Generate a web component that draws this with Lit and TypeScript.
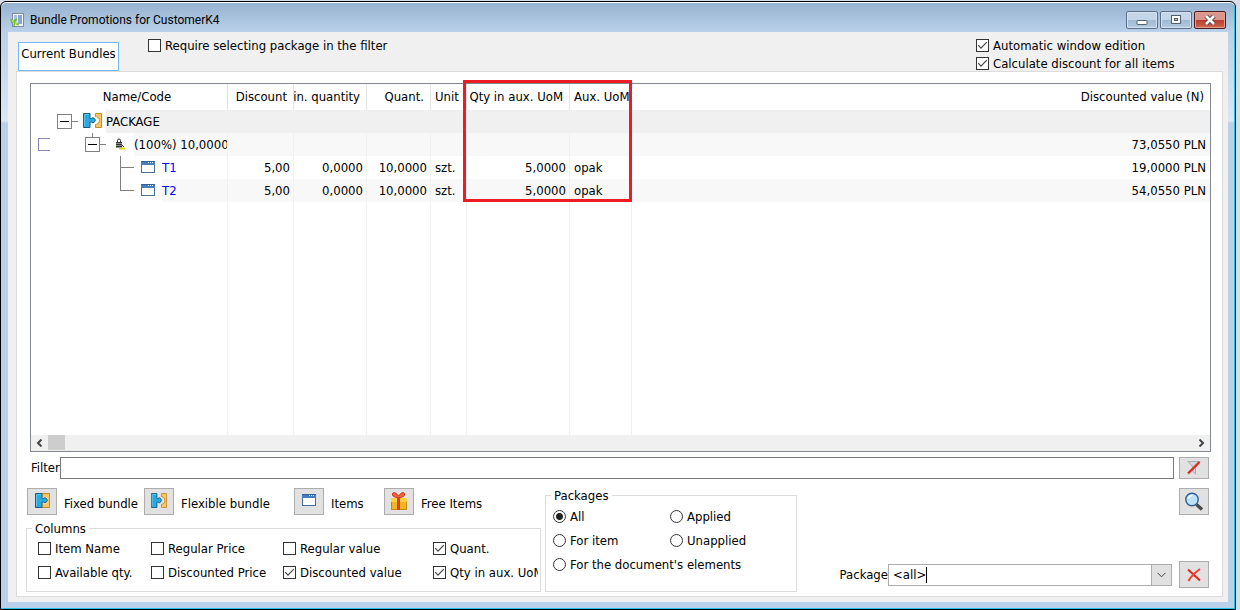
import { LitElement, html, css, svg, nothing } from "lit";
import { customElement } from "lit/decorators.js";

const bluePiece = svg`
  <path d="M0.5 0.5h6.500v5h1.200a2.400 2.400 0 1 1 0 3.500H7v5.500h-6.500z" fill="#29a9dd" stroke="#14608c"/>
  <path d="M1.500 13V1.500H6" stroke="#5cc6ee" fill="none"/>`;

const puzzleOpen = svg`
  <path d="M12.500 0.500h6v14h-6v-3.200h1a3.900 3.900 0 0 0 0-7.600h-1z" fill="#fbc768" stroke="#c98a22"/>
  ${bluePiece}`;

const puzzleClosed = svg`
  <path d="M6.500 0.500h8v14h-8z" fill="#fbc45c" stroke="#c98a22"/>
  <circle cx="9.500" cy="7.300" r="3.600" fill="#fde3ae"/>
  ${bluePiece}`;

const windowGlyph = svg`
  <rect x="0.5" y="0.5" width="13" height="11" fill="#fff" stroke="#4c6e94"/>
  <rect x="0" y="0" width="14" height="4" fill="#4480bd"/>
  <path d="M0 0.5h14" stroke="#2f619b"/>
  <path d="M7 1.5h1M9 1.5h1M11 1.5h1" stroke="#fff"/>`;

const minusBox = (x: number, y: number) => svg`
  <rect x="${x + 0.5}" y="${y + 0.5}" width="14" height="14" fill="#fff" stroke="#808080"/>
  <path d="M${x + 3} ${y + 7.5}h9" stroke="#000"/>
  <path d="M${x + 15} ${y + 7.5}h6" stroke="#808080"/>`;

@customElement("app-root")
export class AppRoot extends LitElement {
  static styles = css`
    :host {
      display: block;
      height: 100vh;
      font: 13px/15px "DejaVu Sans Condensed", "DejaVu Sans", sans-serif;
      color: #000;
      background: #d8dde9;
      box-sizing: border-box;
      padding: 1px 4px 0 0;
    }
    * { box-sizing: border-box; }
    .window {
      height: 100%;
      display: flex;
      flex-direction: column;
      border: 1px solid #000;
      border-radius: 6px 6px 0 0;
      box-shadow: inset 0 1px #fff, inset -1px -1px #22c3e6;
      padding: 1px 7px 7px 7px;
      background: linear-gradient(#99b4d1 2px, #b9d1ea 30px, #c4d8ee 60px, #dae8f6 119px, #b9d1ea 121px);
    }
    .title {
      flex: none;
      height: 29px;
      display: flex;
      align-items: center;
      gap: 6px;
      padding: 5px 2px 0;
      font: 12px/16px Roboto, "Open Sans", sans-serif;
    }
    .title h1 { flex: 1; margin: 0; font: inherit; }
    .caption { display: flex; gap: 2px; }
    .caption button {
      width: 32px;
      height: 18px;
      padding: 0;
      border: 1px solid #5b6f8a;
      border-radius: 2px;
      box-shadow: inset 0 0 0 1px #d3e1f0;
      background: linear-gradient(#c3d5e8 50%, #9fb8d3 50%, #b4cbe3);
      display: grid;
      place-items: center;
    }
    .caption .close {
      border-color: #4d1a1e;
      box-shadow: inset 0 0 0 1px #dfa096;
      background: linear-gradient(#d9968b 50%, #b8392a 50%, #cf6a50);
    }
    .client {
      flex: 1;
      min-height: 0;
      display: flex;
      flex-direction: column;
      background: #f0f0f0;
      padding: 0 5px 5px 8px;
    }
    .top { flex: none; height: 39px; display: flex; align-items: flex-start; padding-left: 2px; }
    .tab {
      align-self: flex-end;
      height: 29px;
      width: 101px;
      padding: 0 0 6px;
      border: 1px solid #73b9f5;
      background: #fff;
      font: inherit;
      color: inherit;
      white-space: nowrap;
      display: flex;
      align-items: center;
      justify-content: center;
    }
    .require { flex: 1; padding: 6px 0 0 29px; }
    .options { flex: 0 0 247px; padding-top: 6px; display: grid; gap: 3px; }
    .check { display: flex; gap: 4px; align-items: center; white-space: nowrap; }
    .check input {
      appearance: none;
      flex: none;
      margin: 0;
      width: 13px;
      height: 13px;
      border: 1px solid #333;
      background: #fff;
    }
    .check input[type="checkbox"]:checked {
      background: #fff url("data:image/svg+xml,%3Csvg xmlns='http://www.w3.org/2000/svg' viewBox='0 0 11 11'%3E%3Cpath d='M1.2 5.2l2.8 2.9 5.8-5.9' fill='none' stroke='%23444' stroke-width='1.2'/%3E%3C/svg%3E");
    }
    .check input[type="radio"] { border-radius: 50%; }
    .check input[type="radio"]:checked { background: radial-gradient(circle, #222 3px, #fff 4px); }
    .panel {
      flex: 1;
      min-height: 0;
      display: flex;
      flex-direction: column;
      background: #fff;
      border: 1px solid #dcdcdc;
      padding: 11px 11px 4px 9px;
    }
    .list {
      flex: 1;
      min-height: 0;
      margin-left: 4px;
      position: relative;
      border: 1px solid #828790;
      display: flex;
      flex-direction: column;
    }
    .view { flex: 1; min-height: 0; }
    table { width: 100%; height: 100%; table-layout: fixed; border-collapse: separate; border-spacing: 0; }
    th, td { padding: 0; font-weight: normal; text-align: left; white-space: nowrap; border-right: 1px solid #f0f0f0; overflow: hidden; }
    th { border-color: #e5e5e5; padding-bottom: 2px; }
    th:last-child, td:last-child { border-right: 0; }
    thead tr { height: 26px; }
    tbody tr { height: 23px; }
    tbody tr.rest { height: auto; }
    th div { display: flex; padding: 0 6px; }
    th .num { justify-content: flex-end; }
    th .center { justify-content: center; padding-left: 22px; }
    th .left, td.left { padding-left: 4px; }
    th .left { padding-right: 0; }
    td.num { text-align: right; padding-right: 3px; }
    td.value { padding-right: 4px; }
    .c-name { width: 197px; }
    .c-disc { width: 66px; }
    .c-min { width: 73px; }
    .c-quant { width: 64px; }
    .c-unit { width: 36px; }
    .c-qty { width: 103px; }
    .c-aux { width: 62px; }
    .group td:not(.name), .group .label { background: #f0f0f0; }
    .alt td:not(.name), .alt .label { background: #f8f8f8; }
    .tree { display: flex; height: 23px; align-items: center; }
    .tree svg { flex: none; display: block; }
    .label { flex: 1; line-height: 23px; }
    .item .label { color: #00f; }
    .mark {
      appearance: none;
      flex: none;
      margin: 0 0 0 7px;
      width: 12px;
      height: 13px;
      border: 1px solid #8c84b8;
      border-right: 0;
    }
    .highlight {
      position: absolute;
      left: 432px;
      top: -4px;
      width: 169px;
      height: 122px;
      border: 3px solid #ed1c24;
      pointer-events: none;
    }
    .scroll { flex: none; height: 16px; background: #f0f0f0; display: flex; }
    .scroll button { width: 17px; border: 0; padding: 0; background: none; display: grid; place-items: center; }
    .thumb { width: 17px; height: 15px; background: #cdcdcd; }
    .scroll .end { margin-left: auto; }
    .filter { flex: none; display: flex; margin: 5px 2px 9px 5px; height: 22px; }
    .filter label { flex: 0 0 29px; line-height: 22px; white-space: nowrap; }
    .filter input { flex: 1; min-width: 0; border: 1px solid #7a7a7a; padding: 0 4px; margin-right: 5px; font: inherit; }
    .tool {
      flex: none;
      width: 30px;
      height: 27px;
      padding: 0;
      border: 1px solid #adadad;
      background: #e1e1e1;
      display: grid;
      place-items: center;
    }
    .filter .tool { height: 22px; }
    .bottom { flex: none; display: grid; grid-template-columns: 515px 252px 1fr; gap: 4px; height: 104px; }
    .left-side { display: flex; flex-direction: column; justify-content: space-between; min-width: 0; }
    .tools { display: grid; grid-template-columns: 117px 150px 90px auto; padding-left: 1px; }
    .tools label { display: flex; gap: 7px; white-space: nowrap; }
    .tools .tool { padding-bottom: 2px; }
    .tools span { padding-top: 8px; }
    fieldset { margin: 0; min-width: 0; border: 1px solid #dcdcdc; padding: 0; }
    legend { margin-left: 5px; padding: 0 3px; line-height: 15px; }
    .columns { height: 71px; }
    .columns .grid { display: grid; grid-template-columns: 113px 132px 150px 105px; row-gap: 9px; padding: 5px 0 0 11px; }
    .columns .check { overflow: hidden; }
    .packages .grid { display: grid; grid-template-columns: 117px auto; row-gap: 9px; padding: 6px 0 0 7px; }
    .packages .wide { grid-column: span 2; }
    .right-side { display: flex; flex-direction: column; justify-content: space-between; align-items: flex-end; padding: 0 2px 4px 0; }
    .package { display: flex; align-items: center; }
    .combo { position: relative; width: 284px; height: 22px; margin-right: 7px; }
    .combo select {
      appearance: none;
      width: 100%;
      height: 100%;
      padding: 0 24px 0 4px;
      border: 1px solid #adadad;
      border-radius: 0;
      background: #fff;
      color: #000;
      font: inherit;
    }
    .arrow {
      position: absolute;
      right: 0;
      top: 0;
      width: 21px;
      height: 22px;
      border: 1px solid #adadad;
      background: #e1e1e1;
      display: grid;
      place-items: center;
      pointer-events: none;
    }
    .caret { position: absolute; left: 38px; top: 3px; width: 1px; height: 16px; background: #000; pointer-events: none; }
  `;

  private check(text: string, checked = false) {
    return html`<label class="check"><input type="checkbox" ?checked=${checked} />${text}</label>`;
  }

  private radio(text: string, checked = false, cls = "") {
    return html`<label class="check ${cls}"><input type="radio" name="packages" ?checked=${checked} />${text}</label>`;
  }

  private tool(id: string, text: string, icon: unknown) {
    return html`<label for=${id}><button class="tool" id=${id}>${icon}</button><span>${text}</span></label>`;
  }

  private item(name: string, value: string, last: boolean) {
    return html`<tr class="item ${last ? "alt" : ""}">
      <td class="name"><div class="tree">
        <svg width="131" height="23">
          <path d="M89.5 0V${last ? 11 : 23}M89 11.5h14" stroke="#808080" fill="none"/>
          <g transform="translate(110,5)">${windowGlyph}</g>
        </svg>
        <span class="label">${name}</span></div></td>
      <td class="num">5,00</td>
      <td class="num">0,0000</td>
      <td class="num">10,0000</td>
      <td class="left">szt.</td>
      <td class="num">5,0000</td>
      <td class="left">opak</td>
      <td class="num value">${value}</td>
    </tr>`;
  }

  private blanks(value: unknown = nothing) {
    return html`<td></td><td></td><td></td><td></td><td></td><td></td><td class="num value">${value}</td>`;
  }

  render() {
    return html`<main class="window">
      <header class="title">
        <svg width="14" height="14" viewBox="0 0 14 14">
          <rect x="2.5" y="0.5" width="11" height="13" fill="#f4f7fc" stroke="#7d8ba5"/>
          <rect x="4" y="2" width="3" height="9" fill="#a9bde0"/><rect x="8" y="2" width="4" height="9" fill="#8ea6d6"/>
          <path d="M0.500 6.500l8 5.500M1 9.500l6-3.500M4 13l1-6" stroke="#6cc41c" stroke-width="1.600" fill="none"/>
          <path d="M2 8h2M5 10h2" stroke="#d6f5b0"/>
        </svg>
        <h1>Bundle Promotions for CustomerK4</h1>
        <div class="caption">
          <button aria-label="Minimize"><svg width="12" height="10"><rect x="1" y="5.5" width="10" height="4" rx="0.5" fill="#fff" stroke="#55606e"/></svg></button>
          <button aria-label="Maximize"><svg width="10" height="10"><rect x="0.5" y="0.5" width="9" height="8" fill="#fff" stroke="#55606e"/><rect x="3.5" y="3.5" width="3" height="2" fill="#a9bed6" stroke="#55606e"/></svg></button>
          <button class="close" aria-label="Close"><svg width="12" height="10"><path d="M2 1l8 8M10 1l-8 8" stroke="#5a3a40" stroke-width="4.500"/><path d="M2 1l8 8M10 1l-8 8" stroke="#fff" stroke-width="2.600"/></svg></button>
        </div>
      </header>
      <section class="client">
        <div class="top">
          <button class="tab">Current Bundles</button>
          <div class="require">${this.check("Require selecting package in the filter")}</div>
          <div class="options">
            ${this.check("Automatic window edition", true)}
            ${this.check("Calculate discount for all items", true)}
          </div>
        </div>
        <div class="panel">
          <div class="list">
            <div class="view">
              <table>
                <colgroup>
                  <col class="c-name" /><col class="c-disc" /><col class="c-min" /><col class="c-quant" />
                  <col class="c-unit" /><col class="c-qty" /><col class="c-aux" /><col />
                </colgroup>
                <thead><tr>
                  <th><div class="center">Name/Code</div></th>
                  <th><div class="num">Discount</div></th>
                  <th><div class="num">Min. quantity</div></th>
                  <th><div class="num">Quant.</div></th>
                  <th><div class="left">Unit</div></th>
                  <th><div class="num">Qty in aux. UoM</div></th>
                  <th><div class="left">Aux. UoM</div></th>
                  <th><div class="num">Discounted value (N)</div></th>
                </tr></thead>
                <tbody>
                  <tr class="group">
                    <td class="name"><div class="tree">
                      <svg width="75" height="23">${minusBox(26, 4)}
                        <g transform="translate(52,3)">${puzzleOpen}</g>
                      </svg>
                      <span class="label">PACKAGE</span></div></td>
                    ${this.blanks()}
                  </tr>
                  <tr class="alt">
                    <td class="name"><div class="tree">
                      <input class="mark" type="checkbox" aria-label="Select (100%) 10,0000" />
                      <svg width="84" height="23" viewBox="19 0 84 23">
                        <path d="M61.5 0v4" stroke="#808080"/>${minusBox(54, 4)}
                        <path d="M86.500 9V7.500a1.500 1.500 0 0 1 3 0V9" fill="none" stroke="#333"/>
                        <rect x="85" y="9" width="6" height="6" fill="#8a8a8a"/>
                        <path d="M85 9.500h6M85 11.500h6M85 13.500h6" stroke="#333"/>
                        <path d="M90 11l3 3" stroke="#333"/><path d="M88 15.500h6" stroke="#e2d21a" stroke-width="2"/>
                      </svg>
                      <span class="label">(100%) 10,0000</span></div></td>
                    ${this.blanks("73,0550 PLN")}
                  </tr>
                  ${this.item("T1", "19,0000 PLN", false)}
                  ${this.item("T2", "54,0550 PLN", true)}
                  <tr class="rest"><td></td>${this.blanks()}</tr>
                </tbody>
              </table>
            </div>
            <div class="scroll">
              <button aria-label="Scroll left"><svg width="7" height="8"><path d="M5.5 0.5L2 4l3.5 3.5" stroke="#444" stroke-width="2" fill="none"/></svg></button>
              <div class="thumb"></div>
              <button class="end" aria-label="Scroll right"><svg width="7" height="8"><path d="M1.5 0.5L5 4 1.5 7.5" stroke="#444" stroke-width="2" fill="none"/></svg></button>
            </div>
            <div class="highlight"></div>
          </div>
          <div class="filter">
            <label for="filter">Filter</label>
            <input id="filter" type="text" />
            <button class="tool" aria-label="Clear filter"><svg width="14" height="14" viewBox="0 0 14 14">
              <path d="M1 0.5h12L8.5 6v7L6 11V6z" fill="#d5d7da" stroke="#a8abb0"/>
              <path d="M1 12.5L12.5 1" stroke="#de2b25" stroke-width="2.4"/></svg></button>
          </div>
          <div class="bottom">
            <div class="left-side">
              <div class="tools">
                ${this.tool("fixed", "Fixed bundle", html`<svg width="15" height="15">${puzzleClosed}</svg>`)}
                ${this.tool("flexible", "Flexible bundle", html`<svg width="16" height="15" viewBox="0 0 19 15" preserveAspectRatio="none">${puzzleOpen}</svg>`)}
                ${this.tool("items", "Items", html`<svg width="14" height="14">${windowGlyph}</svg>`)}
                ${this.tool("free", "Free Items", html`<svg width="18" height="20" viewBox="0 0 18 20">
                  <rect x="1.5" y="8.5" width="15" height="10" fill="#f3b51f" stroke="#c98a12"/>
                  <rect x="1" y="7" width="16" height="4" fill="#fbcf3d"/>
                  <rect x="7" y="6" width="3" height="13" fill="#d8401f"/>
                  <path d="M8.500 6.500C6 6.500 2 6 2.500 3s4-1 6 2C10.500 2 14 0 14.500 3S11 6.500 8.500 6.500z" fill="#f0643c" stroke="#cf3418"/>
                </svg>`)}
              </div>
              <fieldset class="columns">
                <legend>Columns</legend>
                <div class="grid">
                  ${this.check("Item Name")}${this.check("Regular Price")}${this.check("Regular value")}${this.check("Quant.", true)}
                  ${this.check("Available qty.")}${this.check("Discounted Price")}${this.check("Discounted value", true)}${this.check("Qty in aux. UoM", true)}
                </div>
              </fieldset>
            </div>
            <fieldset class="packages">
              <legend>Packages</legend>
              <div class="grid">
                ${this.radio("All", true)}${this.radio("Applied")}
                ${this.radio("For item")}${this.radio("Unapplied")}
                ${this.radio("For the document's elements", false, "wide")}
              </div>
            </fieldset>
            <div class="right-side">
              <button class="tool" aria-label="Search"><svg width="20" height="20" viewBox="0 0 20 20">
                <path d="M12.500 12.500l5.500 5" stroke="#4a4a4a" stroke-width="3.400"/>
                <circle cx="8" cy="7.500" r="6.200" fill="#bfe0fa" stroke="#2f5f94" stroke-width="1.400"/>
                <path d="M4.500 6.500a4 4 0 0 1 4-3" stroke="#fff" stroke-width="1.500" fill="none"/></svg></button>
              <div class="package">
                <label for="package">Package</label>
                <div class="combo">
                  <select id="package"><option>&lt;all&gt;</option></select>
                  <span class="caret"></span>
                  <span class="arrow"><svg width="9" height="6"><path d="M0.500 0.800l4 4 4-4" stroke="#444" fill="none"/></svg></span>
                </div>
                <button class="tool" aria-label="Clear package"><svg width="14" height="14" viewBox="0 0 14 14">
                  <path d="M1 1.500l12 11" stroke="#e3261c" stroke-width="2"/><path d="M13 1C9 4 4 8 1.500 13" stroke="#f0452f" stroke-width="2" fill="none"/></svg></button>
              </div>
            </div>
          </div>
        </div>
      </section>
    </main>`;
  }
}
